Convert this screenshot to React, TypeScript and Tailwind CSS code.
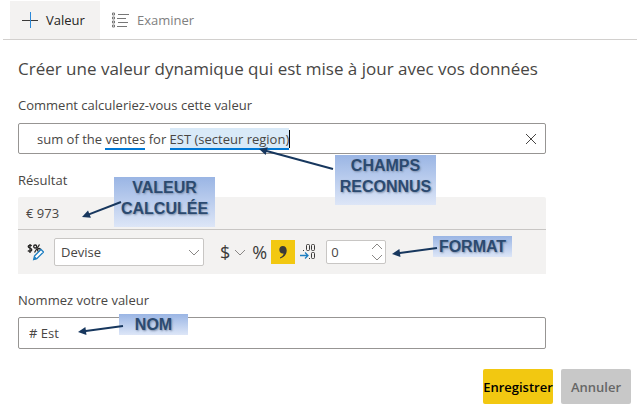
import { useState } from 'react';
import type { ReactNode } from 'react';

interface CalloutProps {
  className: string;
  children: ReactNode;
}

// Gradient label laid over the form to explain one part of it.
function Callout({ className, children }: CalloutProps) {
  return (
    <div
      className={`absolute z-10 bg-linear-to-b from-[#9ab5e4] to-[#dde6f7] text-center font-['Liberation_Sans',sans-serif] text-[16px] font-bold leading-[21px] text-[#2b4a70] [text-shadow:1px_1px_2px_#7f8ea8] ${className}`}
    >
      {children}
    </div>
  );
}

interface ArrowProps {
  className: string;
  // Tail and tip, in the svg's own pixels.
  from: [number, number];
  to: [number, number];
}

function Arrow({ className, from, to }: ArrowProps) {
  const dx = to[0] - from[0];
  const dy = to[1] - from[1];
  const angle = (Math.atan2(dy, dx) * 180) / Math.PI;
  const length = Math.hypot(dx, dy);

  return (
    <svg className={`pointer-events-none absolute z-20 overflow-visible ${className}`} aria-hidden="true">
      <g transform={`translate(${from[0]} ${from[1]}) rotate(${angle})`} fill="#17375e">
        <rect x="0" y="-1" width={length - 6} height="2" />
        <path d={`M${length} 0l-8 -4v8z`} />
      </g>
    </svg>
  );
}

function PlusIcon() {
  return (
    <svg width="16" height="16" viewBox="0 0 16 16" fill="none" aria-hidden="true">
      <path d="M0 8.5h16" stroke="#3b3a39" />
      <path d="M8.5 0v16" stroke="#2b88d8" />
    </svg>
  );
}

function ReviewIcon() {
  return (
    <svg width="17" height="16" viewBox="0 0 17 16" fill="none" aria-hidden="true">
      <path d="M6 2.5h11M5 6.5h9M6 10.5h10M5 14.5h10" stroke="#777" />
      <path
        d="M.5 1h2v2h-2zM.5 5h2v2h-2zM.5 9h2v2h-2zM.5 13h2v2h-2z"
        stroke="#777"
      />
    </svg>
  );
}

function FormatIcon() {
  return (
    <svg width="17" height="18" viewBox="0 0 17 18" fill="none" aria-hidden="true">
      <g stroke="#252423" strokeWidth="1.3">
        <path d="M4.8 2.8C3.6 2 1.2 2 1.2 3.6c0 1.8 3.6 1.2 3.6 3.2C4.800 8.500 2.200 8.500 .8 7.600M3 1v9" />
        <path d="M12.500 1.500l-5 8" />
        <circle cx="8.200" cy="3.500" r="1.500" />
        <circle cx="12" cy="7" r="1.500" />
      </g>
      <path d="M7.500 13l6.500-6.500 2.500 2.500-6.500 6.500-3.300 1z" fill="#fff" stroke="#1e7fc2" strokeWidth="1.300" />
      <path d="M6.500 17l1-4 3 3z" fill="#1e7fc2" />
    </svg>
  );
}

interface ChevronProps {
  className?: string;
  up?: boolean;
}

function Chevron({ className = '', up = false }: ChevronProps) {
  return (
    <svg
      className={className}
      width="12"
      height="7"
      viewBox="0 0 12 7"
      fill="none"
      stroke="#8a8886"
      aria-hidden="true"
    >
      <path d={up ? 'M1 6l5-5 5 5' : 'M1 1l5 5 5-5'} />
    </svg>
  );
}

function DecimalsIcon() {
  return (
    <svg width="16" height="16" viewBox="0 0 16 16" fill="none" aria-hidden="true">
      <g stroke="#3b3a39">
        <rect x="6.500" y=".5" width="3" height="6" rx="1" />
        <rect x="11.500" y=".5" width="3" height="6" rx="1" />
        <rect x="11.500" y="8.500" width="3" height="6" rx="1" />
      </g>
      <path d="M3 6h1v1h-1zM9 14h1v1h-1z" fill="#3b3a39" />
      <path d="M0 11.500h8M5 8.500l3 3-3 3" stroke="#1e7fc2" strokeWidth="1.300" />
    </svg>
  );
}

export default function App() {
  const [query, setQuery] = useState('sum of the ventes for EST (secteur region)');
  const [format, setFormat] = useState('Devise');
  const [decimals, setDecimals] = useState(0);
  const [name, setName] = useState('# Est');

  const step = (by: number) => setDecimals((n) => Math.max(0, n + by));

  return (
    <div className="bg-white pb-[3px] font-['Open_Sans',sans-serif] text-[13px] leading-5 text-[#484644]">
      <nav className="ml-[3px] flex h-10 border-b border-[#d2d0ce] pl-[7px] pt-px">
        <button className="flex w-[90px] items-center gap-2 bg-[#f3f2f1] pl-3 text-[#252423]">
          <PlusIcon />
          Valeur
        </button>
        <button className="flex items-center gap-2 px-3 text-[#808080]">
          <ReviewIcon />
          Examiner
        </button>
      </nav>

      <main className="ml-[18px] mr-[91px] pt-[15px]">
        <h1 className="whitespace-nowrap text-[17px] leading-7">
          Créer une valeur dynamique qui est mise à jour avec vos données
        </h1>

        <section className="relative mt-3">
          <label htmlFor="query">Comment calculeriez-vous cette valeur</label>
          <div className="relative mt-2 flex h-[31px] items-center rounded-xs border border-[#979593] bg-white">
            {/* Recognised fields are marked behind the transparent input. */}
            <div
              aria-hidden="true"
              className="absolute inset-0 flex items-center whitespace-pre pl-[18px] text-transparent select-none"
            >
              <span>sum of the </span>
              <span className="border-b-2 border-[#0078d4]">ventes</span>
              <span> for </span>
              <span className="border-b-2 border-[#0078d4] bg-[#d9eaf8]">EST (secteur region)</span>
              <span className="h-[18px] w-px bg-black" />
            </div>
            <input
              id="query"
              className="relative h-full min-w-0 flex-1 bg-transparent pl-[18px] outline-none"
              value={query}
              onChange={(e) => setQuery(e.target.value)}
            />
            <button className="relative mr-1 p-1" aria-label="Effacer" onClick={() => setQuery('')}>
              <svg width="12" height="12" viewBox="0 0 12 12" stroke="#484644" aria-hidden="true">
                <path d="M1 1l10 10M11 1L1 11" />
              </svg>
            </button>
          </div>

          <Callout className="left-[317px] top-[60px] w-[101px] pb-2">
            CHAMPS
            <br />
            RECONNUS
          </Callout>
          <Arrow className="left-[240px] top-[53px] h-5 w-[76px]" from={[75, 21]} to={[1, 1]} />
        </section>

        <section className="relative mt-4">
          <h2>Résultat</h2>
          <div className="mt-[7px] rounded-t-xs bg-[#f3f2f1]">
            <output className="block h-8 pl-2 leading-8">€ 973</output>
            <div className="flex h-[45px] items-center border-t border-[#c8c6c4] pl-[9px]">
              <button aria-label="Format">
                <FormatIcon />
              </button>
              <div className="relative ml-[10px] w-[150px]">
                <select
                  aria-label="Type de format"
                  className="h-7 w-full appearance-none rounded-xs border border-[#c8c6c4] bg-white pl-[6px]"
                  value={format}
                  onChange={(e) => setFormat(e.target.value)}
                >
                  <option>Devise</option>
                </select>
                <Chevron className="pointer-events-none absolute right-1 top-[11px]" />
              </div>
              <button className="ml-4 flex items-center gap-1 text-[18px] text-[#3b3a39]" aria-label="Devise">
                $
                <Chevron />
              </button>
              <button className="ml-[6px] text-[18px] text-[#3b3a39]" aria-label="Pourcentage">
                %
              </button>
              <button
                className="ml-1 flex size-6 items-center justify-center bg-[#f2c811]"
                aria-label="Séparateur de milliers"
              >
                <svg width="8" height="13" viewBox="0 0 8 13" fill="#3b3a39" aria-hidden="true">
                  <path d="M3.800 0C6.300 0 7.700 1.800 7.700 4.600c0 4-2.700 6.800-6.700 7.800v-1c2.200-.9 3.400-2.200 3.600-4C2.200 7.900 .3 6.300 .3 3.700 .3 1.500 1.700 0 3.800 0z" />
                </svg>
              </button>
              <button className="ml-[5px]" aria-label="Décimales">
                <DecimalsIcon />
              </button>
              <div className="ml-[10px] flex h-6 w-[60px] rounded-xs border border-[#c8c6c4] bg-white">
                <input
                  aria-label="Nombre de décimales"
                  className="w-0 flex-1 bg-transparent pl-1 outline-none"
                  value={decimals}
                  onChange={(e) => setDecimals(Number(e.target.value) || 0)}
                />
                <div className="flex flex-col justify-between px-[2px] py-[2px]">
                  <button aria-label="Augmenter" onClick={() => step(1)}>
                    <Chevron up />
                  </button>
                  <button aria-label="Diminuer" onClick={() => step(-1)}>
                    <Chevron />
                  </button>
                </div>
              </div>
            </div>
          </div>

          <Callout className="left-[96px] top-[7px] w-[101px] pb-2">
            VALEUR
            <br />
            CALCULÉE
          </Callout>
          <Arrow className="left-[64px] top-[31px] h-4 w-10" from={[39, 1]} to={[0, 16]} />
          <Callout className="left-[415px] top-[66px] w-[79px]">FORMAT</Callout>
          <Arrow className="left-[374px] top-[77px] h-2 w-[46px]" from={[45, 1]} to={[0, 7]} />
        </section>

        <section className="relative mt-4">
          <label htmlFor="name">Nommez votre valeur</label>
          <input
            id="name"
            className="mt-[7px] block h-8 w-full rounded-xs border border-[#979593] bg-white pl-[10px] outline-none"
            value={name}
            onChange={(e) => setName(e.target.value)}
          />

          <Callout className="left-[101px] top-6 w-[69px]">NOM</Callout>
          <Arrow className="left-[60px] top-[35px] h-2 w-[46px]" from={[45, 1]} to={[0, 7]} />
        </section>
      </main>

      <footer className="mr-[6px] mt-5 flex justify-end gap-2 font-semibold">
        <button className="h-[35px] w-[70px] rounded-xs bg-[#f2c811] text-black">Enregistrer</button>
        <button className="h-[35px] w-[70px] rounded-xs bg-[#c8c8c8] text-[#666]">Annuler</button>
      </footer>
    </div>
  );
}
